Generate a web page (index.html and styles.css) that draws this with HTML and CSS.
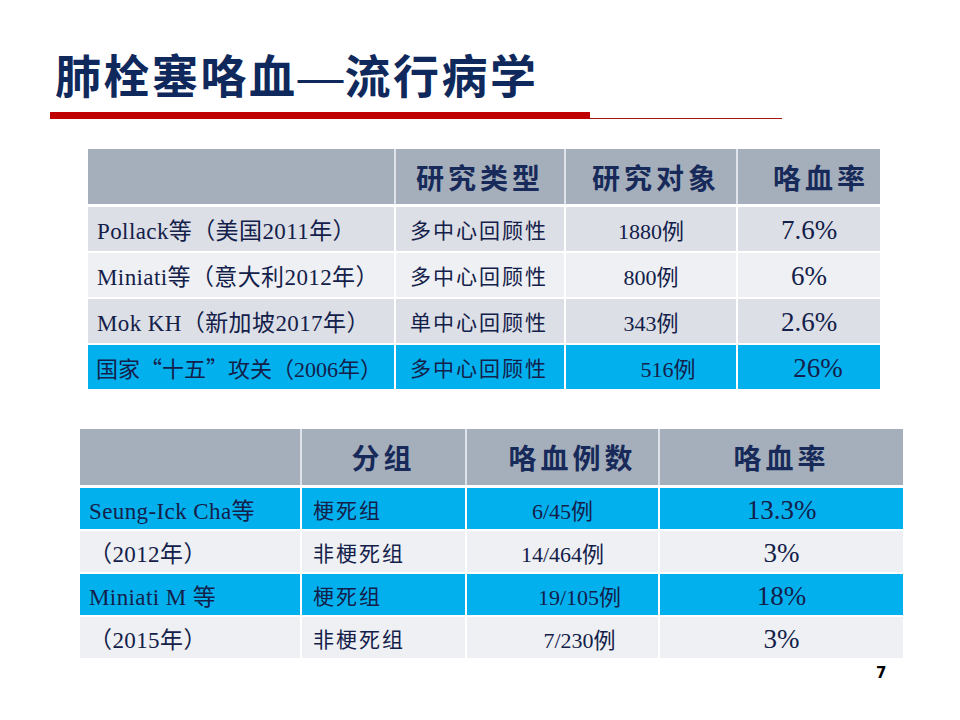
FILE: index.html
```html
<!DOCTYPE html>
<html lang="zh-CN">
<head>
<meta charset="utf-8">
<title>肺栓塞咯血—流行病学</title>
<link rel="stylesheet" href="styles.css">
</head>
<body>
<div class="slide">
  <h1 class="title">肺栓塞咯血<span class="dash">—</span>流行病学</h1>
  <div class="rule"><span class="rule-bar"></span><span class="rule-line"></span></div>

  <table class="tbl tbl1">
    <colgroup><col class="c1a"><col class="c1b"><col class="c1c"><col class="c1d"></colgroup>
    <thead>
      <tr><th></th><th>研究类型</th><th class="h-obj">研究对象</th><th class="h-rate1">咯血率</th></tr>
    </thead>
    <tbody>
      <tr class="r-gray"><td class="name">Pollack等（美国2011年）</td><td class="type">多中心回顾性</td><td class="num">1880例</td><td class="pct">7.6%</td></tr>
      <tr class="r-light"><td class="name">Miniati等（意大利2012年）</td><td class="type">多中心回顾性</td><td class="num">800例</td><td class="pct">6%</td></tr>
      <tr class="r-gray"><td class="name">Mok KH（新加坡2017年）</td><td class="type">单中心回顾性</td><td class="num">343例</td><td class="pct">2.6%</td></tr>
      <tr class="r-cyan"><td class="name fit"><span class="cjk">国家“十五”攻关</span>（2006年）</td><td class="type">多中心回顾性</td><td class="num shift">516例</td><td class="pct shift-s">26%</td></tr>
    </tbody>
  </table>

  <table class="tbl tbl2">
    <colgroup><col class="c2a"><col class="c2b"><col class="c2c"><col class="c2d"></colgroup>
    <thead>
      <tr><th></th><th>分组</th><th class="h-cnt">咯血例数</th><th>咯血率</th></tr>
    </thead>
    <tbody>
      <tr class="r-cyan"><td class="name">Seung-Ick Cha等</td><td class="type">梗死组</td><td class="num">6/45例</td><td class="pct">13.3%</td></tr>
      <tr class="r-light"><td class="name">（2012年）</td><td class="type">非梗死组</td><td class="num">14/464例</td><td class="pct">3%</td></tr>
      <tr class="r-cyan"><td class="name">Miniati M 等</td><td class="type">梗死组</td><td class="num shift">19/105例</td><td class="pct">18%</td></tr>
      <tr class="r-light"><td class="name">（2015年）</td><td class="type">非梗死组</td><td class="num shift">7/230例</td><td class="pct">3%</td></tr>
    </tbody>
  </table>

  <div class="page-num">7</div>
</div>
</body>
</html>
```
FILE: styles.css
```css
html, body {
  margin: 0;
  padding: 0;
  background: #ffffff;
}

.slide {
  width: 960px;
  height: 720px;
  box-sizing: border-box;
  padding-top: 43px;
  background: #ffffff;
  font-family: "Liberation Serif", "Noto Sans CJK SC", serif;
  color: #13204a;
  overflow: hidden;
}

.title {
  margin: 0 0 0 55px;
  height: 60px;
  line-height: 60px;
  font-family: "Noto Sans CJK SC", sans-serif;
  font-weight: 700;
  font-size: 46px;
  letter-spacing: 2.5px;
  color: #10295c;
}

.title .dash {
  font-family: "Liberation Sans", sans-serif;
  font-weight: 400;
  letter-spacing: 0;
  margin-right: 1px;
}

.rule {
  display: flex;
  align-items: flex-end;
  margin: 9px 0 0 50px;
  height: 7px;
}

.rule-bar {
  width: 540px;
  height: 7px;
  background: #c00000;
}

.rule-line {
  width: 192px;
  height: 1px;
  background: #a31515;
}

.tbl {
  border-collapse: collapse;
  border-style: hidden;
  table-layout: fixed;
}

.tbl1 {
  margin: 30px 0 0 88px;
  width: 792px;
}

.tbl2 {
  margin: 40px 0 0 80px;
  width: 823px;
}

.c1a { width: 307px; }
.c1b { width: 170px; }
.c1c { width: 172px; }
.c1d { width: 143px; }

.c2a { width: 221px; }
.c2b { width: 165px; }
.c2c { width: 193px; }
.c2d { width: 244px; }

.tbl th {
  background: #a5afbb;
  border: 2px solid #dfe4ea;
  border-bottom: 3px solid #ffffff;
  font-family: "Noto Sans CJK SC", sans-serif;
  font-weight: 700;
  font-size: 28px;
  letter-spacing: 4px;
  color: #172a5a;
  text-align: center;
  padding: 0;
}

.tbl1 th { height: 55px; }
.tbl2 th { height: 56px; }

.tbl1 .h-obj { padding-left: 10px; }
.tbl1 .h-rate1 { padding-left: 24px; }
.tbl2 .h-cnt { padding-left: 20px; }

.tbl td {
  border: 2px solid #ffffff;
  padding: 0;
  white-space: nowrap;
  overflow: hidden;
}

.tbl1 td { height: 41px; }
.tbl2 td { height: 38px; }

.r-gray td { background: #dcdfe5; }
.r-light td { background: #eef0f3; }
.r-cyan td { background: #03b0ee; }

.name {
  font-size: 23px;
  letter-spacing: 0.4px;
  padding-left: 9px !important;
}

.name.fit {
  font-size: 22px;
  letter-spacing: 0;
  padding-left: 8px !important;
}

.name .cjk {
  font-family: "Noto Sans CJK SC", sans-serif;
  letter-spacing: 0;
}

.type {
  font-family: "Noto Sans CJK SC", sans-serif;
  font-size: 21px;
  letter-spacing: 2px;
  padding-left: 14px !important;
}

.tbl2 .type {
  padding-left: 11px !important;
}

.num {
  font-size: 22px;
  text-align: center;
}

.num.shift { padding-left: 34px !important; }

.pct {
  font-size: 27px;
  text-align: center;
  padding-top: 3px !important;
}

.pct.shift-s { padding-left: 18px !important; }

.page-num {
  margin: 6px 0 0 876px;
  font-family: "DejaVu Sans", sans-serif;
  font-weight: 700;
  font-size: 15px;
  color: #000000;
}
```
